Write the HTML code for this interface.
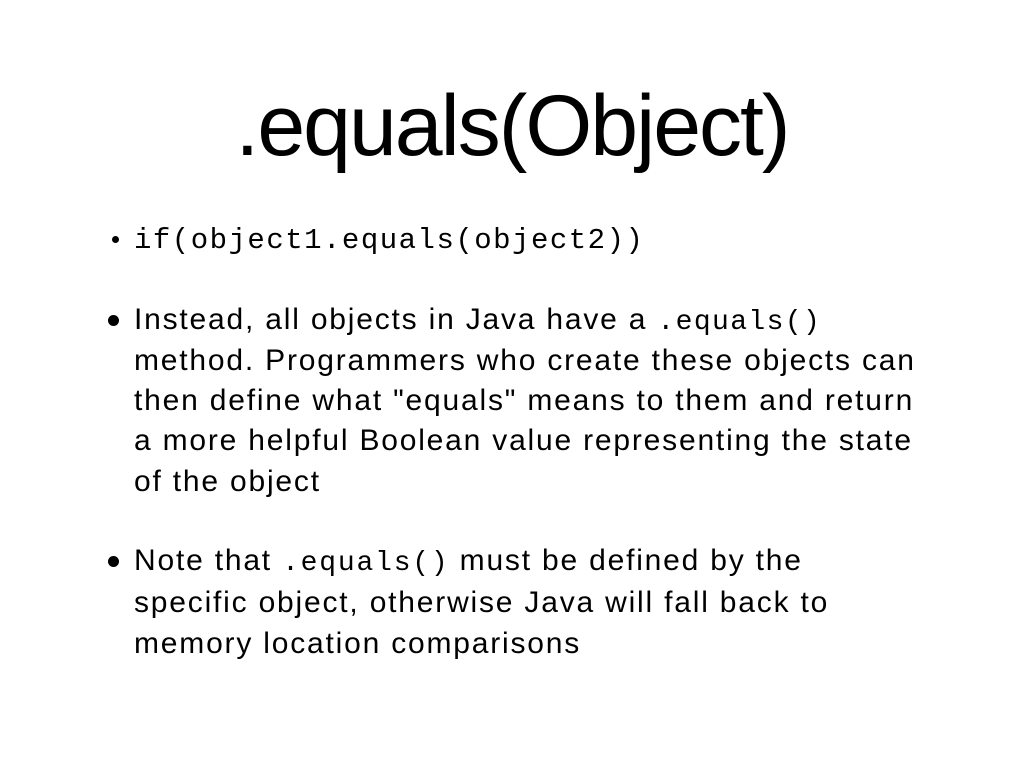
<!DOCTYPE html>
<html><head><meta charset="utf-8"><style>
html,body{margin:0;padding:0;background:#fff;}
body{width:1024px;height:768px;position:relative;overflow:hidden;font-family:"Liberation Sans",Arial,sans-serif;color:#000;}
.t{position:absolute;white-space:nowrap;}
.title{left:0;width:1024px;text-align:center;top:76px;font-size:86px;line-height:100px;font-weight:normal;letter-spacing:-2px;}
.l{font-size:30px;line-height:34px;left:134px;letter-spacing:1.8px;}
.m{font-family:"Liberation Mono","Courier New",monospace;font-size:28px;letter-spacing:1.5px;}
.dot{position:absolute;width:11px;height:11px;border-radius:50%;background:#000;left:108px;}
.sdot{position:absolute;width:7px;height:7px;border-radius:50%;background:#000;left:112px;}
</style></head><body>
<div class="t title">.equals(Object)</div>

<div class="sdot" style="top:236px"></div>
<div class="t l m" style="top:224px;letter-spacing:1.5px;font-size:29px">if(object1.equals(object2))</div>

<div class="dot" style="top:315px"></div>
<div class="t l" style="top:303px;">Instead, all objects in Java have a <span class="m" style="letter-spacing:1.4px">.equals()</span></div>
<div class="t l" style="top:344px;">method. Programmers who create these objects can</div>
<div class="t l" style="top:384px;">then define what "equals" means to them and return</div>
<div class="t l" style="top:424px;">a more helpful Boolean value representing the state</div>
<div class="t l" style="top:465px;">of the object</div>

<div class="dot" style="top:556px"></div>
<div class="t l" style="top:544px;">Note that <span class="m" style="letter-spacing:1.8px">.equals()</span> must be defined by the</div>
<div class="t l" style="top:586px;">specific object, otherwise Java will fall back to</div>
<div class="t l" style="top:627px;">memory location comparisons</div>
</body></html>
